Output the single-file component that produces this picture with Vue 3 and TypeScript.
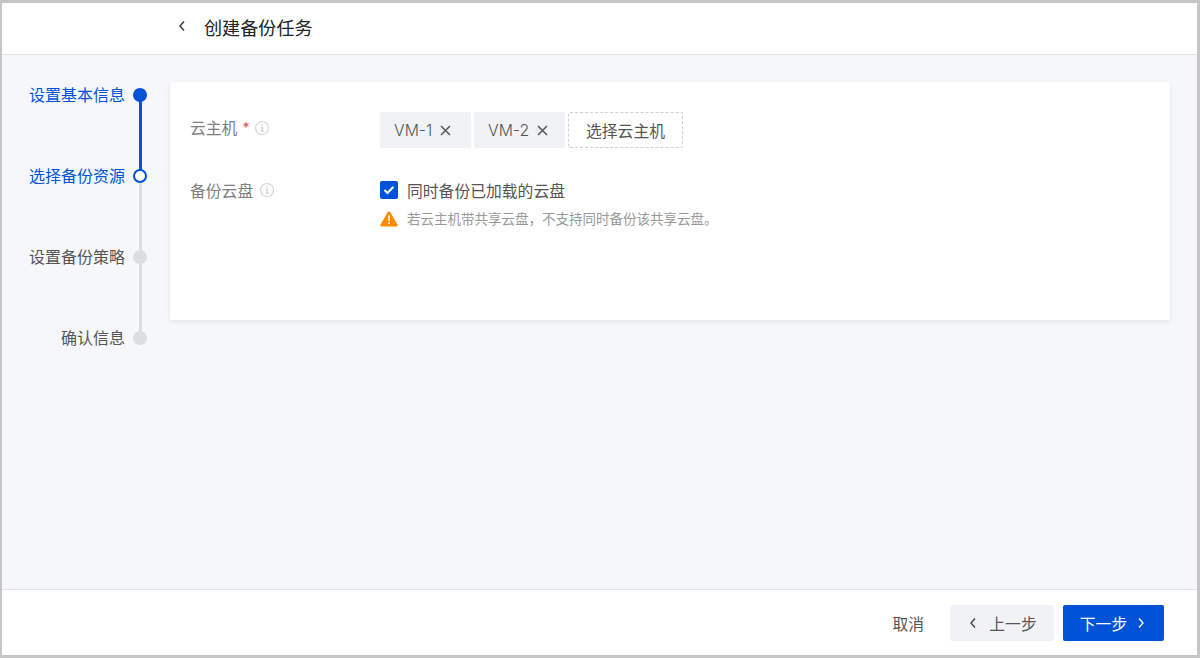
<script setup lang="ts">
interface Step { label: string; state: 'done' | 'current' | 'todo' }
const steps: Step[] = [
  { label: '设置基本信息', state: 'done' },
  { label: '选择备份资源', state: 'current' },
  { label: '设置备份策略', state: 'todo' },
  { label: '确认信息', state: 'todo' },
]
const tags = ['VM-1', 'VM-2']
</script>

<template>
  <div class="page">
    <header class="top">
      <svg class="back" width="8" height="12" viewBox="0 0 8 12"><path d="M6 1.500 2 6l4 4.500" fill="none" stroke="#333" stroke-width="1.400"/></svg>
      <h1>创建备份任务</h1>
    </header>
    <main class="main">
      <nav class="steps">
        <div v-for="s in steps" :key="s.label" class="step" :class="s.state">
          <span class="step-label">{{ s.label }}</span>
          <span class="dot"></span>
        </div>
      </nav>
      <section class="card">
        <div class="row first">
          <div class="label">云主机<span class="req">*</span>
            <svg class="info" width="16" height="16" viewBox="0 0 16 16"><circle cx="8" cy="8" r="6.500" fill="none" stroke="#d4d6da" stroke-width="1.200"/><path d="M8 4.400v1.400M6.900 7.300H8.200v4M6.800 11.300h2.800" fill="none" stroke="#c4c6ca" stroke-width="1.100"/></svg>
          </div>
          <div class="tags">
            <span v-for="t in tags" :key="t" class="tag"><span class="tag-text">{{ t }}</span>
              <svg width="11" height="11" viewBox="0 0 11 11"><path d="M1 1l9 9M10 1 1 10" stroke="#555" stroke-width="1.500" fill="none"/></svg>
            </span>
            <span class="pick">选择云主机</span>
          </div>
        </div>
        <div class="row second">
          <div class="label">备份云盘
            <svg class="info wide" width="16" height="16" viewBox="0 0 16 16"><circle cx="8" cy="8" r="6.500" fill="none" stroke="#d4d6da" stroke-width="1.200"/><path d="M8 4.400v1.400M6.900 7.300H8.200v4M6.800 11.300h2.800" fill="none" stroke="#c4c6ca" stroke-width="1.100"/></svg>
          </div>
          <div class="opts">
            <label class="check">
              <span class="box"><svg width="12" height="10" viewBox="0 0 12 10"><path d="M1.500 5 4.500 8 10.500 1.800" fill="none" stroke="#fff" stroke-width="2"/></svg></span>
              同时备份已加载的云盘
            </label>
            <p class="hint">
              <svg width="18" height="16" viewBox="0 0 18 16"><path d="M9 .5c.6 0 1 .3 1.300.8l7.300 12.400c.5.900-.1 1.800-1.100 1.800H1.500c-1 0-1.600-.9-1.100-1.800L7.700 1.300C8 .8 8.400.5 9 .5z" fill="#ff8a00"/><path d="M9 4.500v5.500M9 11.200v1.800" stroke="#fff" stroke-width="1.500"/></svg>
              若云主机带共享云盘，不支持同时备份该共享云盘。
            </p>
          </div>
        </div>
      </section>
    </main>
    <footer class="bottom">
      <button class="link">取消</button>
      <button class="btn prev">
        <svg width="8" height="12" viewBox="0 0 8 12"><path d="M6 1.500 2 6l4 4.500" fill="none" stroke="#444" stroke-width="1.400"/></svg>
        上一步
      </button>
      <button class="btn next">
        下一步
        <svg width="8" height="12" viewBox="0 0 8 12"><path d="M2 1.500 6 6l-4 4.500" fill="none" stroke="#fff" stroke-width="1.400"/></svg>
      </button>
    </footer>
  </div>
</template>

<style>
html, body { margin: 0; padding: 0; }
</style>

<style scoped>
.page {
  box-sizing: border-box;
  width: 1200px;
  height: 658px;
  border: solid #c6c6c6;
  border-width: 3px 3px 3px 2px;
  background: #f5f7fb;
  display: flex;
  flex-direction: column;
  font-family: "Inter", "Noto Sans CJK SC", sans-serif;
  font-size: 15.8px;
  color: #555;
}
.top {
  box-sizing: border-box;
  height: 52px;
  background: #fff;
  border-bottom: 1px solid #e3e4e6;
  display: flex;
  align-items: center;
  padding: 0 0 2px 176px;
  gap: 18px;
}
.back { flex: none; margin-top: -3px; }
h1 { margin: -1px 0 0; font-size: 18.100px; font-weight: 400; color: #222; }
.main {
  flex: 1;
  display: flex;
  padding-top: 27px;
  min-height: 0;
}
.steps {
  width: 145px;
  flex: none;
  padding-top: 3px;
}
.step {
  position: relative;
  height: 81px;
  display: flex;
  justify-content: flex-end;
  align-items: flex-start;
  gap: 8px;
  line-height: 20px;
  font-size: 16px;
  color: #555;
}
.dot {
  box-sizing: border-box;
  width: 14px;
  height: 14px;
  border-radius: 50%;
  margin-top: 3px;
  background: #dcdde1;
  position: relative;
  z-index: 1;
  flex: none;
}
.step::after {
  content: "";
  position: absolute;
  right: 5.500px;
  top: 10px;
  width: 3px;
  height: 81px;
  background: #dcdde1;
}
.step:last-child::after { display: none; }
.done, .current { color: #0052d9; }
.done .dot { background: #0052d9; }
.done::after { background: #0052d9; }
.current .dot { background: #fff; border: 2px solid #0052d9; }
.card {
  box-sizing: border-box;
  width: 1000px;
  height: 238px;
  margin-left: 23px;
  background: #fff;
  border-radius: 2px;
  box-shadow: 0 2px 4px rgba(0, 0, 0, 0.08);
  padding: 30px 20px 0;
}
.row { display: flex; }
.label { width: 190px; flex: none; display: flex; align-items: center; height: 31px; color: #808080; }
.req { color: #e34d59; font-size: 14px; margin-left: 5px; }
.info { margin-left: 5px; }
.info.wide { margin-left: 6px; }
.tags { display: flex; gap: 3px; }
.tag {
  box-sizing: border-box;
  height: 36px;
  width: 91px;
  background: #f0f2f6;
  border-radius: 2px;
  display: flex;
  align-items: center;
  padding-left: 14px;
  gap: 8px;
  color: #555;
}
.tag-text { font-weight: 300; padding-top: 1px; }
.pick {
  box-sizing: border-box;
  height: 36px;
  width: 115px;
  border: 1px dashed #d0d0d0;
  border-radius: 2px;
  display: flex;
  align-items: center;
  justify-content: center;
  color: #555;
}
.second { margin-top: 25px; }
.second .label { height: 34px; }
.opts { display: flex; flex-direction: column; }
.check { display: flex; align-items: center; gap: 9px; height: 34px; color: #555; }
.box {
  box-sizing: border-box;
  width: 18px;
  height: 18px;
  background: #0052d9;
  border-radius: 2px;
  display: flex;
  align-items: center;
  justify-content: center;
}
.hint {
  margin: 2px 0 0;
  display: flex;
  align-items: center;
  gap: 9px;
  font-size: 13.500px;
  color: #999;
  line-height: 20px;
}
.bottom {
  box-sizing: border-box;
  height: 66px;
  background: #fff;
  border-top: 1px solid #e3e4e6;
  display: flex;
  align-items: center;
  justify-content: flex-end;
  padding-right: 33px;
  padding-top: 1px;
}
button { font: inherit; border: 0; cursor: pointer; padding: 0; }
.link { background: none; color: #555; margin-right: 26px; }
.btn {
  height: 36px;
  border-radius: 2px;
  display: flex;
  align-items: center;
  justify-content: center;
}
.prev { box-sizing: border-box; width: 104px; background: #f0f2f6; color: #555; gap: 12px; padding-left: 2px; }
.next { box-sizing: border-box; width: 101px; background: #0052d9; color: #fff; margin-left: 9px; gap: 10px; padding-right: 2px; }
</style>
